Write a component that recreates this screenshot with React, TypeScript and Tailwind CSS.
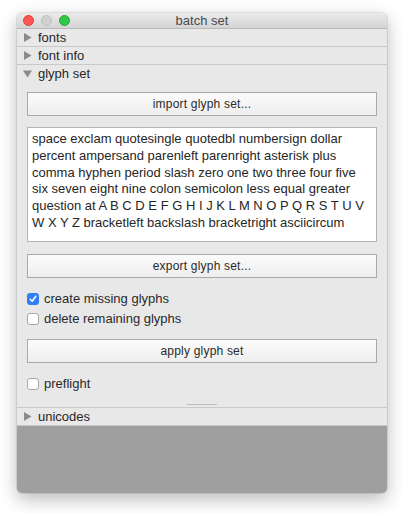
import { useState } from 'react'

const glyphText =
  'space exclam quotesingle quotedbl numbersign dollar percent ampersand parenleft parenright asterisk plus comma hyphen period slash zero one two three four five six seven eight nine colon semicolon less equal greater question at A B C D E F G H I J K L M N O P Q R S T U V W X Y Z bracketleft backslash bracketright asciicircum'

function Triangle({ open }: { open: boolean }) {
  return (
    <svg width="9" height="9" viewBox="0 0 9 9" className="shrink-0">
      {open ? <path d="M0 1.5 L9 1.5 L4.5 8.5 Z" fill="#8a8a8a" /> : <path d="M1 0 L8.5 4.5 L1 9 Z" fill="#8a8a8a" />}
    </svg>
  )
}

function SectionHeader({ label, open = false }: { label: string; open?: boolean }) {
  return (
    <div className="flex items-center gap-[6px] h-[17px] pl-[6px] text-[13px] text-[#262626]">
      <Triangle open={open} />
      <span>{label}</span>
    </div>
  )
}

function MacButton({ label }: { label: string }) {
  return (
    <button className="w-full h-[24px] border border-[#a9a9a9] bg-gradient-to-b from-[#fbfbfb] to-[#eeeeee] text-[12px] text-[#2a2a2a] tracking-[0.2px]">
      {label}
    </button>
  )
}

function Check({ label, checked, onToggle }: { label: string; checked: boolean; onToggle: () => void }) {
  return (
    <label className="flex items-center gap-[5px] h-[14px] cursor-default text-[13px] text-[#2a2a2a]" onClick={onToggle}>
      {checked ? (
        <span className="w-[12px] h-[12px] rounded-[3px] bg-[#2f80f7] flex items-center justify-center">
          <svg width="8" height="8" viewBox="0 0 8 8">
            <path d="M1.2 4.3 L3.2 6.3 L6.8 1.2" stroke="white" strokeWidth="1.5" fill="none" strokeLinecap="round" strokeLinejoin="round" />
          </svg>
        </span>
      ) : (
        <span className="w-[12px] h-[12px] rounded-[3px] bg-white border border-[#a8a8a8]" />
      )}
      <span>{label}</span>
    </label>
  )
}

export default function App() {
  const [createMissing, setCreateMissing] = useState(true)
  const [deleteRemaining, setDeleteRemaining] = useState(false)
  const [preflight, setPreflight] = useState(false)

  return (
    <div className="w-[403px] h-[514px] bg-white pt-[13px] pl-[17px]" style={{ fontFamily: '"Liberation Sans", Arial, sans-serif' }}>
      <div className="w-[370px] h-[480px] rounded-[5px] overflow-hidden flex flex-col bg-[#e8e8e8] shadow-[0_6px_18px_rgba(0,0,0,0.28),0_0_0_1px_rgba(0,0,0,0.08)]">
        {/* title bar */}
        <div className="relative h-[16px] shrink-0 flex items-center justify-center bg-gradient-to-b from-[#ebebeb] to-[#d4d4d4] border-b border-[#b9b9b9]">
          <div className="absolute left-[6px] top-[2px] flex gap-[7px]">
            <span className="w-[11px] h-[11px] rounded-full bg-[#fc5753] border border-[#df3d39]" />
            <span className="w-[11px] h-[11px] rounded-full bg-[#d0d0d0] border border-[#bdbdbd]" />
            <span className="w-[11px] h-[11px] rounded-full bg-[#33c748] border border-[#23a935]" />
          </div>
          <span className="text-[13px] text-[#4a4a4a] leading-none">batch set</span>
        </div>

        <div className="border-b border-[#c9c9c9]">
          <SectionHeader label="fonts" />
        </div>
        <div className="border-b border-[#c9c9c9]">
          <SectionHeader label="font info" />
        </div>

        <div className="border-b border-[#c9c9c9]">
          <SectionHeader label="glyph set" open />
          <div className="px-[10px] pt-[10px] flex flex-col">
            <MacButton label="import glyph set..." />
            <div className="mt-[11px] h-[115px] bg-white border border-[#b4b4b4] px-[4px] pt-[3px] text-[13px] leading-[16.8px] text-[#262626]">
              {glyphText}
            </div>
            <div className="mt-[11px]">
              <MacButton label="export glyph set..." />
            </div>
            <div className="mt-[14px] flex flex-col gap-[6px]">
              <Check label="create missing glyphs" checked={createMissing} onToggle={() => setCreateMissing(!createMissing)} />
              <Check label="delete remaining glyphs" checked={deleteRemaining} onToggle={() => setDeleteRemaining(!deleteRemaining)} />
            </div>
            <div className="mt-[12px]">
              <MacButton label="apply glyph set" />
            </div>
            <div className="mt-[14px]">
              <Check label="preflight" checked={preflight} onToggle={() => setPreflight(!preflight)} />
            </div>
            <div className="mt-[13px] pb-[2px] flex justify-center">
              <span className="w-[30px] h-[1px] bg-[#bdbdbd]" />
            </div>
          </div>
        </div>

        <div className="border-b border-[#c9c9c9]">
          <SectionHeader label="unicodes" />
        </div>

        <div className="flex-1 bg-[#9f9f9f]" />
      </div>
    </div>
  )
}
